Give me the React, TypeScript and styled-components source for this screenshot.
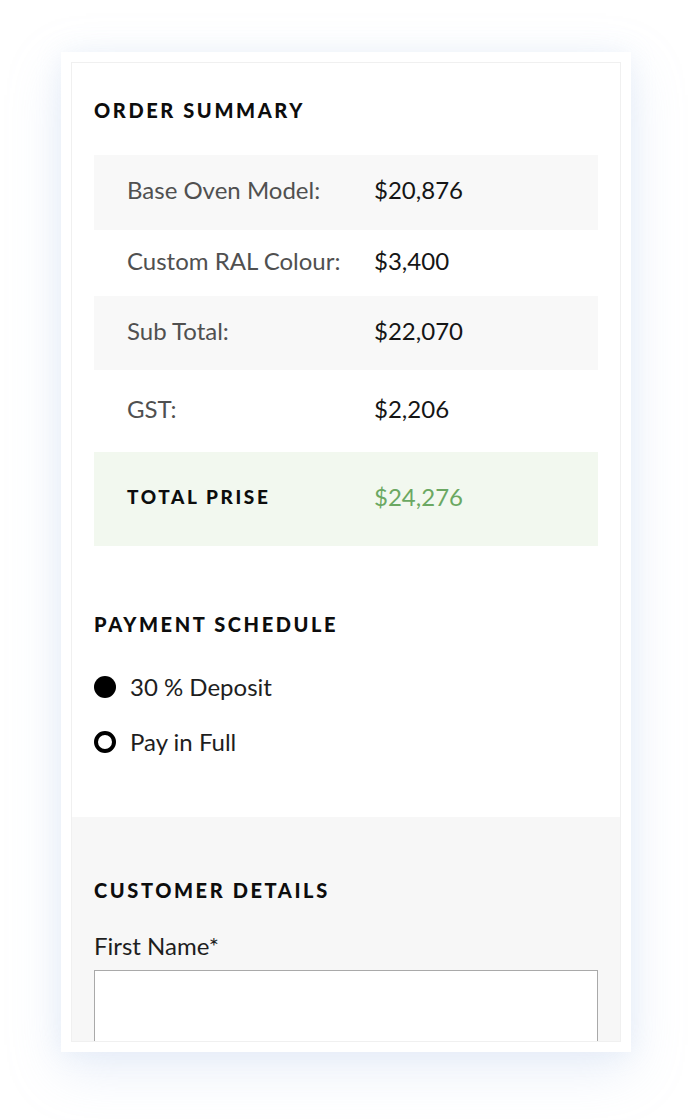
import styled, { createGlobalStyle } from 'styled-components';

const GlobalStyle = createGlobalStyle`
    html, body {
        margin: 0;
        padding: 0;
        background: #ffffff;
    }
    body {
        font-family: Lato, "Noto Sans", "Liberation Sans", sans-serif;
        color: #1a1a1a;
    }
    * {
        box-sizing: border-box;
    }
`;

const Page = styled.div`
    width: 692px;
    height: 1120px;
    padding-top: 52px;
    overflow: hidden;
`;

const Frame = styled.div`
    width: 570px;
    height: 1000px;
    margin: 0 auto;
    padding: 10px;
    background: #ffffff;
    box-shadow: 0 18px 50px rgba(170, 195, 230, 0.26), 0 0 24px rgba(190, 210, 235, 0.2);
`;

const Card = styled.div`
    height: 100%;
    border: 1px solid #f0f0f0;
    overflow: hidden;
    display: flex;
    flex-direction: column;
`;

const Section = styled.section<{ $muted?: boolean; $top: number; $bottom: number }>`
    padding: ${p => p.$top}px 22px ${p => p.$bottom}px;
    background: ${p => (p.$muted ? '#f7f7f7' : '#ffffff')};
    flex-shrink: 0;
`;

const Heading = styled.h2<{ $gap: number }>`
    margin: 0 0 ${p => p.$gap}px;
    font-size: 20px;
    line-height: 24px;
    font-weight: 900;
    letter-spacing: 2.6px;
    text-transform: uppercase;
    color: #0d0d0d;
`;

const Summary = styled.div`
    display: flex;
    flex-direction: column;
    margin-bottom: 66px;
`;

const SummaryRow = styled.div<{ $h: number; $tone?: 'grey' | 'green' }>`
    display: grid;
    grid-template-columns: 247px 1fr;
    align-items: center;
    height: ${p => p.$h}px;
    padding: 0 0 4px 33px;
    background: ${p => (p.$tone === 'grey' ? '#f8f8f8' : p.$tone === 'green' ? '#f2f8ef' : 'transparent')};
    font-size: 24px;
    line-height: 1.2;
`;

const Label = styled.span`
    color: #505050;
    font-weight: 400;
`;

const Value = styled.span<{ $accent?: boolean }>`
    color: ${p => (p.$accent ? '#6ba862' : '#151515')};
    font-weight: 400;
`;

const TotalLabel = styled.span`
    font-size: 19px;
    font-weight: 900;
    letter-spacing: 2.6px;
    color: #0d0d0d;
`;

const Options = styled.div`
    display: flex;
    flex-direction: column;
    gap: 26px;
`;

const Option = styled.label`
    display: flex;
    align-items: center;
    gap: 14px;
    font-size: 24px;
    line-height: 1.2;
    color: #1e1e1e;
    font-weight: 400;
`;

const Dot = styled.span<{ $checked?: boolean }>`
    width: 22px;
    height: 22px;
    border-radius: 50%;
    flex-shrink: 0;
    background: ${p => (p.$checked ? '#000000' : '#ffffff')};
    border: ${p => (p.$checked ? 'none' : '4px solid #000000')};
`;

const FieldLabel = styled.label`
    display: block;
    margin-bottom: 10px;
    font-size: 24px;
    line-height: 1.2;
    color: #1e1e1e;
    font-weight: 400;
`;

const TextInput = styled.input`
    display: block;
    width: 100%;
    height: 110px;
    margin: 0;
    border: 1px solid #a9a9a9;
    background: #ffffff;
    outline: none;
`;

const rows = [
    { label: 'Base Oven Model:', value: '$20,876', h: 75, tone: 'grey' as const },
    { label: 'Custom RAL Colour:', value: '$3,400', h: 66 },
    { label: 'Sub Total:', value: '$22,070', h: 74, tone: 'grey' as const },
    { label: 'GST:', value: '$2,206', h: 82 },
];

export default function App() {
    return (
        <>
            <GlobalStyle />
            <Page>
                <Frame>
                    <Card>
                        <Section $top={35} $bottom={60}>
                            <Heading $gap={33}>Order Summary</Heading>
                            <Summary>
                                {rows.map(row => (
                                    <SummaryRow key={row.label} $h={row.h} $tone={row.tone}>
                                        <Label>{row.label}</Label>
                                        <Value>{row.value}</Value>
                                    </SummaryRow>
                                ))}
                                <SummaryRow $h={94} $tone="green">
                                    <TotalLabel>TOTAL PRISE</TotalLabel>
                                    <Value $accent>$24,276</Value>
                                </SummaryRow>
                            </Summary>
                            <Heading $gap={37}>Payment Schedule</Heading>
                            <Options>
                                <Option>
                                    <Dot $checked />
                                    30 % Deposit
                                </Option>
                                <Option>
                                    <Dot />
                                    Pay in Full
                                </Option>
                            </Options>
                        </Section>
                        <Section $muted $top={61} $bottom={40}>
                            <Heading $gap={30}>Customer Details</Heading>
                            <FieldLabel htmlFor="first-name">First Name*</FieldLabel>
                            <TextInput id="first-name" type="text" />
                        </Section>
                    </Card>
                </Frame>
            </Page>
        </>
    );
}
